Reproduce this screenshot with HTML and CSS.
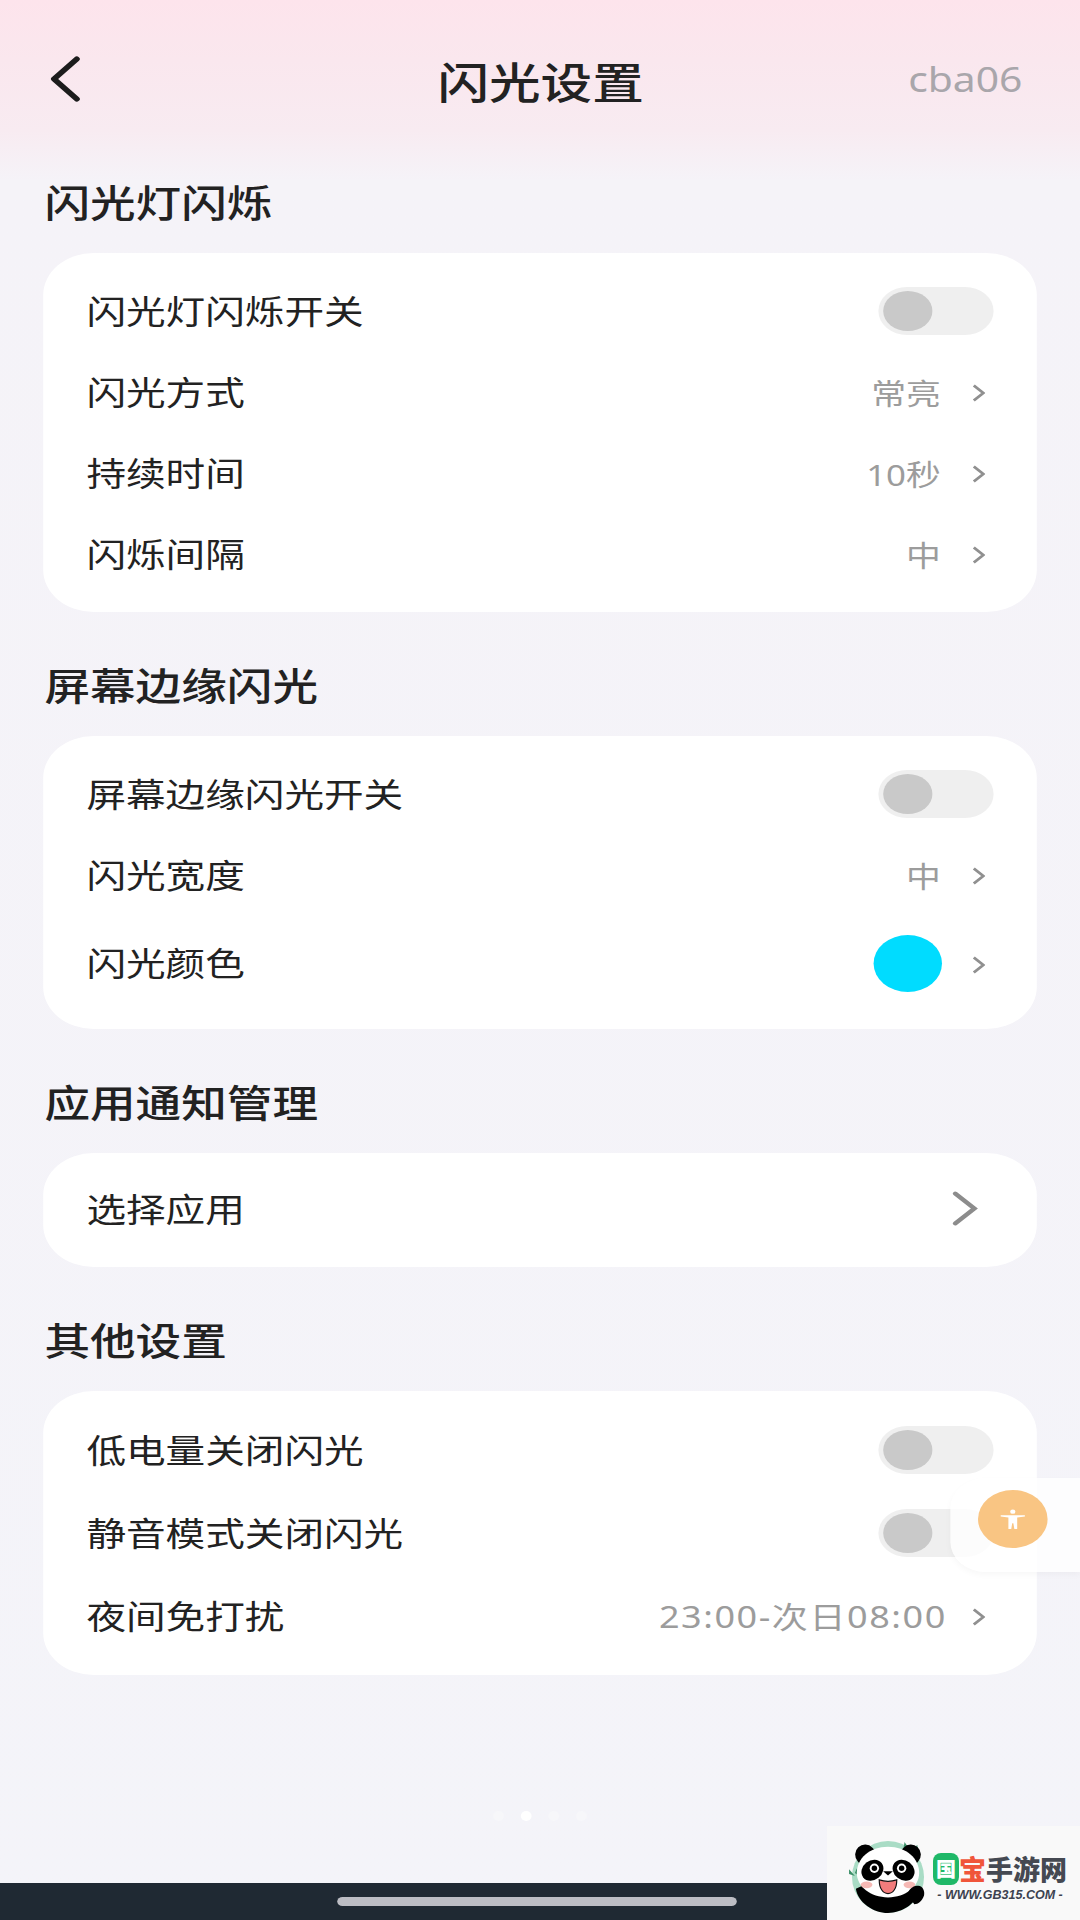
FILE: index.html
```html
<!DOCTYPE html>
<html lang="zh-CN">
<head>
    <meta charset="utf-8">
    <title>闪光设置</title>
    <link rel="stylesheet" href="styles.css">
</head>
<body>
    <div class="app">
        <header class="header">
            <svg class="back" viewBox="0 0 26 46"><path d="M23 3L4 23l19 20"/></svg>
            <h1 class="title">闪光设置</h1>
            <span class="model">cba06</span>
        </header>

        <section class="section">
            <h2 class="section-title">闪光灯闪烁</h2>
            <div class="card">
                <div class="row">
                    <span class="label">闪光灯闪烁开关</span>
                    <span class="toggle"><i class="knob"></i></span>
                </div>
                <div class="row">
                    <span class="label">闪光方式</span>
                    <span class="value">常亮</span>
                    <svg class="chevron" viewBox="0 0 11 18"><path d="M1.5 1.5L9.5 9l-8 7.5"/></svg>
                </div>
                <div class="row">
                    <span class="label">持续时间</span>
                    <span class="value">10秒</span>
                    <svg class="chevron" viewBox="0 0 11 18"><path d="M1.5 1.5L9.5 9l-8 7.5"/></svg>
                </div>
                <div class="row">
                    <span class="label">闪烁间隔</span>
                    <span class="value">中</span>
                    <svg class="chevron" viewBox="0 0 11 18"><path d="M1.5 1.5L9.5 9l-8 7.5"/></svg>
                </div>
            </div>
        </section>

        <section class="section">
            <h2 class="section-title">屏幕边缘闪光</h2>
            <div class="card">
                <div class="row">
                    <span class="label">屏幕边缘闪光开关</span>
                    <span class="toggle"><i class="knob"></i></span>
                </div>
                <div class="row">
                    <span class="label">闪光宽度</span>
                    <span class="value">中</span>
                    <svg class="chevron" viewBox="0 0 11 18"><path d="M1.5 1.5L9.5 9l-8 7.5"/></svg>
                </div>
                <div class="row row-tall">
                    <span class="label">闪光颜色</span>
                    <span class="color-dot"></span>
                    <svg class="chevron" viewBox="0 0 11 18"><path d="M1.5 1.5L9.5 9l-8 7.5"/></svg>
                </div>
            </div>
        </section>

        <section class="section">
            <h2 class="section-title">应用通知管理</h2>
            <div class="card card-single">
                <div class="row">
                    <span class="label">选择应用</span>
                    <svg class="chevron-big" viewBox="0 0 22 36"><path d="M3 3l16 15L3 33"/></svg>
                </div>
            </div>
        </section>

        <section class="section">
            <h2 class="section-title">其他设置</h2>
            <div class="card">
                <div class="row row-wide">
                    <span class="label">低电量关闭闪光</span>
                    <span class="toggle"><i class="knob"></i></span>
                </div>
                <div class="row row-wide">
                    <span class="label">静音模式关闭闪光</span>
                    <span class="toggle"><i class="knob"></i></span>
                </div>
                <div class="row row-wide">
                    <span class="label">夜间免打扰</span>
                    <span class="value value-time">23:00-次日08:00</span>
                    <svg class="chevron" viewBox="0 0 11 18"><path d="M1.5 1.5L9.5 9l-8 7.5"/></svg>
                </div>
            </div>
        </section>

        <div class="dots"><i></i><i class="on"></i><i></i><i></i></div>

        <div class="navbar"><span class="home-bar"></span></div>

        <div class="float-panel">
            <span class="float-btn">
                <svg viewBox="0 0 24 24"><circle cx="12" cy="4" r="2.4"/><path d="M1 8h22v1.2l-7 1.2V23h-2.6l-.9-6.500h-1L10.600 23H8V10.400L1 9.200z"/></svg>
            </span>
        </div>
    </div>

    <div class="watermark">
        <svg class="panda" viewBox="0 0 84 76">
            <circle class="halo" cx="42" cy="38" r="37"/>
            <path class="leaf" d="M59 2l6 9-7-3zM72 5l1 6-4-2zM2 30l6 7-6-2zM10 29l1 7-3-2z"/>
            <path d="M11 22a9 9 0 0 1 15-14l6 6-16 14zM73 22a9 9 0 0 0-15-14l-6 6 16 14z"/>
            <path d="M9 50c2 14 18 25 33 25 14 0 28-9 33-22l-8-5-25 6-24-8z"/>
            <path class="face" d="M42 7c19 0 32 12 32 27 0 14-14 25-32 25S10 48 10 34C10 19 23 7 42 7z"/>
            <ellipse cx="26" cy="31" rx="12" ry="10" transform="rotate(-38 26 31)"/>
            <ellipse cx="58" cy="31" rx="12" ry="10" transform="rotate(38 58 31)"/>
            <circle class="face" cx="28" cy="29" r="4.800"/><circle cx="28" cy="29" r="2.800"/>
            <circle class="face" cx="56" cy="29" r="4.800"/><circle cx="56" cy="29" r="2.800"/>
            <ellipse class="cheek" cx="20" cy="46" rx="6" ry="3.500"/>
            <ellipse class="cheek" cx="64" cy="46" rx="6" ry="3.500"/>
            <path d="M37 32h10l-5 4.500z"/>
            <path class="tongue" d="M33 41c6 2 12 2 18 0 0 9-4 14-9 14s-9-5-9-14z"/>
            <path d="M62 56c1-5 6-10 11-9 5 0 7 6 6 10-2 6-6 9-10 9z"/>
        </svg>
        <div class="brand">
            <div class="brand-name"><span class="brand-box">国</span><span class="brand-red">宝</span><span class="brand-dark">手游网</span></div>
            <div class="brand-url">- WWW.GB315.COM -</div>
        </div>
    </div>
</body>
</html>
```

FILE: styles.css
```css
* {
    box-sizing: border-box;
}

html, body {
    margin: 0;
    height: 1920px;
    overflow: hidden;
}

body {
    position: relative;
    width: 1080px;
    font-family: "Noto Sans", "Noto Sans CJK SC", sans-serif;
    color: #222;
    background: linear-gradient(#fde4ec 0, #fae7ee 60px, #f8ebf1 130px, #f5f3f8 180px, #f4f4f9 100%);
}

/* the screenshot is stretched sideways, so the page is laid out at 900px and widened */
.app {
    position: relative;
    display: flex;
    flex-direction: column;
    width: 900px;
    height: 1920px;
    transform: scaleX(1.2);
    transform-origin: 0 0;
}

.header {
    display: grid;
    grid-template-columns: 1fr auto 1fr;
    align-items: center;
    height: 166px;
    padding: 0 48px 0 41px;
    margin-bottom: 8px;
}

.back {
    width: 26px;
    height: 46px;
    margin-bottom: 8px;
}

.back path {
    fill: none;
    stroke: #1c1c1c;
    stroke-width: 5;
    stroke-linecap: round;
    stroke-linejoin: round;
}

.title {
    margin: 0 0 0 8px;
    font-size: 43px;
    font-weight: 500;
    line-height: 56px;
}

.model {
    justify-self: end;
    margin-bottom: 8px;
    font-size: 34px;
    color: #a9a6ab;
}

.section {
    padding: 0 36px;
    margin-bottom: 45px;
}

.section-title {
    margin: 0 0 23px 1px;
    font-size: 38px;
    font-weight: 500;
    line-height: 56px;
}

.card {
    padding: 18px 0 17px;
    background: #fff;
    border-radius: 42px;
}

.card-single {
    padding: 16px 0 17px;
}

.row {
    display: flex;
    align-items: center;
    height: 81px;
    padding: 0 36px;
}

.row-tall {
    height: 96px;
}

.row-wide {
    height: 83px;
}

.label {
    flex: 1;
    padding-bottom: 4px;
    font-size: 33px;
}

.value {
    padding-bottom: 2px;
    font-size: 29px;
    color: #9c9c9c;
}

.value-time {
    margin-right: -5px;
    padding-bottom: 4px;
    font-size: 30px;
    letter-spacing: 1.3px;
}

.chevron {
    width: 11px;
    height: 18px;
    margin: 1px 7px 0 26px;
}

.chevron path {
    fill: none;
    stroke: #909090;
    stroke-width: 2.4;
}

.chevron-big {
    width: 22px;
    height: 37px;
    margin: 0 13px 3px 0;
}

.chevron-big path {
    fill: none;
    stroke: #8c8c8c;
    stroke-width: 4;
    stroke-linecap: round;
}

.toggle {
    display: flex;
    align-items: center;
    width: 96px;
    height: 48px;
    margin-bottom: 2px;
    padding-left: 4px;
    background: #efefef;
    border-radius: 24px;
}

.knob {
    width: 41px;
    height: 40px;
    background: #c9c9c9;
    border-radius: 50%;
}

.color-dot {
    width: 57px;
    height: 57px;
    margin: 0 -1px 2px 0;
    background: #00dcff;
    border-radius: 50%;
}

.dots {
    display: flex;
    justify-content: center;
    gap: 14px;
    margin-top: auto;
    margin-bottom: 62px;
}

.dots i {
    width: 9px;
    height: 10px;
    background: #f7f7fa;
    border-radius: 50%;
}

.dots .on {
    background: #fff;
}

.navbar {
    display: flex;
    justify-content: center;
    height: 37px;
    padding: 14px 6px 0 0;
    background: #1f2933;
}

.home-bar {
    width: 333px;
    height: 9px;
    background: #bcbdc4;
    border-radius: 5px;
}

.float-panel {
    position: absolute;
    top: 1478px;
    left: 792px;
    display: flex;
    align-items: center;
    width: 108px;
    height: 94px;
    padding: 0 0 13px 23px;
    background: rgba(255, 255, 255, 0.8);
    border-radius: 30px 0 0 30px;
    box-shadow: 0 3px 6px rgba(0, 0, 0, 0.03);
}

.float-btn {
    display: flex;
    align-items: center;
    justify-content: center;
    width: 58px;
    height: 58px;
    background: #f9c583;
    border-radius: 50%;
}

.float-btn svg {
    width: 22px;
    height: 26px;
    fill: #fff;
}

.watermark {
    position: absolute;
    right: 0;
    bottom: 0;
    display: flex;
    align-items: center;
    width: 253px;
    height: 94px;
    padding: 8px 0 0 20px;
    background: #f9f9f9;
}

.panda {
    width: 82px;
    height: 74px;
    margin-right: 4px;
}

.panda .leaf {
    fill: #3c8f68;
}

.panda .halo {
    fill: #a9dcc5;
}

.panda .face {
    fill: #fff;
}

.panda .cheek {
    fill: #f6b9b5;
}

.panda .tongue {
    fill: #f27c7c;
    stroke: #111;
    stroke-width: 1.200;
}

.brand-name {
    display: flex;
    align-items: center;
    height: 34px;
    font-size: 27px;
    font-weight: 900;
    font-family: "Noto Sans CJK SC", sans-serif;
    line-height: 1;
}

.brand-box {
    display: flex;
    align-items: center;
    justify-content: center;
    width: 26px;
    height: 32px;
    font-size: 20px;
    color: #fff;
    background: #1fb868;
    border-radius: 8px;
}

.brand-red {
    color: #f0553a;
}

.brand-dark {
    color: #454952;
}

.brand-url {
    margin-top: 1px;
    text-align: center;
    font-family: "Liberation Sans", sans-serif;
    font-size: 12.500px;
    font-weight: 700;
    font-style: italic;
    line-height: 16px;
    color: #3d4250;
}
```
